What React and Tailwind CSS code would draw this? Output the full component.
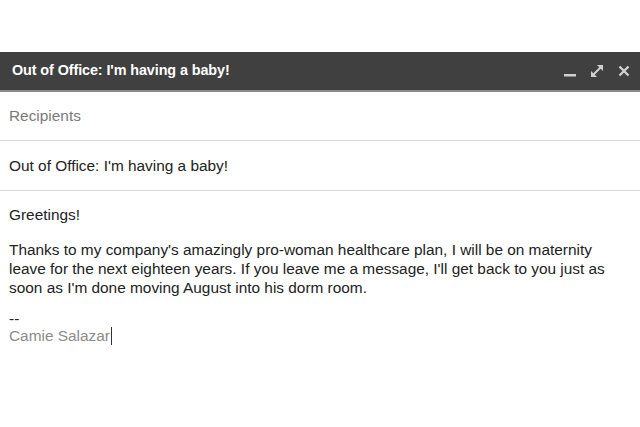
export default function App() {
  const font = { fontFamily: '"Liberation Sans", Arial, sans-serif' };
  return (
    <div className="w-[640px] h-[427px] bg-white overflow-hidden" style={font}>
      <div className="h-[52px]" />
      <div className="h-[40px] bg-[#404040] border-b-2 border-[#8a8a8a] flex items-center justify-between pl-[12px] pr-[9px]">
        <span className="text-white font-bold text-[14.4px] tracking-[-0.1px]">Out of Office: I'm having a baby!</span>
        <div className="flex items-center gap-[12px] text-[#cfcfcf]">
          <svg width="14" height="14" viewBox="0 0 14 14"><rect x="1" y="10" width="12" height="2.5" fill="currentColor" /></svg>
          <svg width="16" height="16" viewBox="0 0 16 16" fill="currentColor">
            <path d="M4.5 11.5 L11.5 4.5" stroke="currentColor" strokeWidth="2" />
            <path d="M8 2 H14 V8 Z" />
            <path d="M2 8 V14 H8 Z" />
          </svg>
          <svg width="14" height="14" viewBox="0 0 14 14" fill="none" stroke="currentColor" strokeWidth="2.4">
            <path d="M2.5 2.5 L11.5 11.5 M11.5 2.5 L2.5 11.5" />
          </svg>
        </div>
      </div>
      <div className="h-[49px] border-b border-[#d6d6d6] flex items-center pl-[9px] text-[15.4px] text-[#7a7a7a]">Recipients</div>
      <div className="h-[50px] border-b border-[#d6d6d6] flex items-center pl-[9px] text-[15.4px] text-[#222]">Out of Office: I'm having a baby!</div>
      <div className="pl-[9px] pt-[14px] text-[15.4px] leading-[19px] text-[#222]">
        <div>Greetings!</div>
        <div className="mt-[16px]">
          Thanks to my company's amazingly pro-woman healthcare plan, I will be on maternity<br />
          leave for the next eighteen years. If you leave me a message, I'll get back to you just as<br />
          soon as I'm done moving August into his dorm room.
        </div>
        <div className="mt-[14px] leading-[15px]">--</div>
        <div className="text-[#8c8c8c] flex items-center leading-[19px]">Camie Salazar<span className="inline-block w-px h-[18px] bg-[#333] ml-px" /></div>
      </div>
    </div>
  );
}
